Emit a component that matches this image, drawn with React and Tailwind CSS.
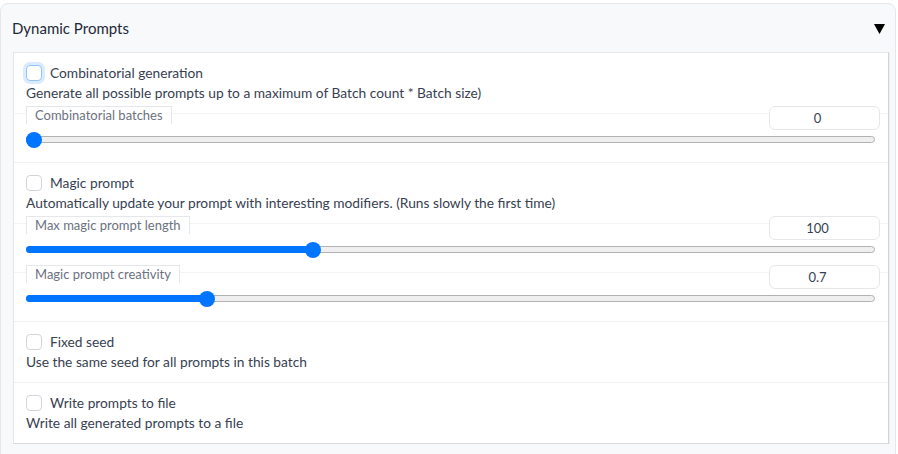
import React from "react";

const font = { fontFamily: '"Source Sans Pro", Lato, "Noto Sans", sans-serif' };

function Checkbox({ focused }) {
  return (
    <span
      className={
        "inline-block w-4 h-4 rounded-[4px] bg-white border shrink-0 " +
        (focused ? "border-[#93c5fd] ring-[3px] ring-[#dbeafe]" : "border-[#d1d5db]")
      }
    />
  );
}

function Slider({ label, value, pct }) {
  return (
    <div>
      <div className="flex justify-between items-start h-[24px] -mx-3 px-3 bg-[linear-gradient(to_bottom,transparent_7px,#f3f4f6_7px,#f3f4f6_8px,transparent_8px)]">
        <span className="h-[18px] px-2 border border-b-0 border-[#e5e7eb] bg-white text-[13px] leading-[17px] text-[#6b7280]">
          {label}
        </span>
        <span className="w-[111px] h-[24px] -mr-1 pr-[14px] rounded-md border border-[#e5e7eb] bg-white text-[13px] leading-[22px] text-center text-[#374151]">
          {value}
        </span>
      </div>
      <div className="relative h-[20px] mr-[1px]">
        <div className="absolute left-0 right-0 top-[6px] h-[7px] rounded-full bg-[#efefef] border border-[#b2b2b2]" />
        <div
          className="absolute left-0 top-[6px] h-[7px] rounded-full bg-[#0075ff]"
          style={{ width: `calc(${pct}% + 7px)` }}
        />
        <div
          className="absolute top-[2px] w-[16px] h-[16px] rounded-full bg-[#0075ff]"
          style={{ left: `calc(${pct / 100} * (100% - 16px))` }}
        />
      </div>
    </div>
  );
}

function Section({ title, desc, focused, first, children, pb = "pb-[10px]" }) {
  return (
    <div className={"px-3 pt-[10px] " + pb + (first ? "" : " border-t border-[#f0f1f3]")}>
      <label className="flex items-center gap-[8px] h-[20px] text-[13.75px] text-[#374151]">
        <Checkbox focused={focused} />
        <span>{title}</span>
      </label>
      <p className="h-[20px] leading-[20px] text-[13.75px] text-[#374151]">{desc}</p>
      {children}
    </div>
  );
}

export default function App() {
  return (
    <div className="w-[898px] h-[454px] overflow-hidden bg-white pt-[3px]" style={font}>
      <div className="w-[896px] h-[470px] rounded-lg border border-[#e5e7eb] bg-[#f8f9fb]">
        <div className="flex items-center justify-between h-[48px] pl-[11px] pr-[10px]">
          <span className="text-[15px] text-[#1f2937]">Dynamic Prompts</span>
          <svg width="11" height="10" viewBox="0 0 11 10" className="mt-[1px]">
            <polygon points="0,0 11,0 5.5,10" fill="#000" />
          </svg>
        </div>
        <div className="ml-[12px] w-[876px] bg-white border border-[#e5e7eb] border-r-[#d4d4d8] border-b-[#d9dadd] shadow-[1px_0_0_#eceef1]">
          <Section
            first
            focused
            title="Combinatorial generation"
            desc="Generate all possible prompts up to a maximum of Batch count * Batch size)"
            pb="pb-[12px]"
          >
            <div className="mt-[3px]">
              <Slider label="Combinatorial batches" value="0" pct={0} />
            </div>
          </Section>
          <Section
            title="Magic prompt"
            desc="Automatically update your prompt with interesting modifiers. (Runs slowly the first time)"
            pb="pb-[12px]"
          >
            <div className="mt-[3px] flex flex-col gap-[5px]">
              <Slider label="Max magic prompt length" value="100" pct={33.5} />
              <Slider label="Magic prompt creativity" value="0.7" pct={20.8} />
            </div>
          </Section>
          <Section title="Fixed seed" desc="Use the same seed for all prompts in this batch" />
          <Section title="Write prompts to file" desc="Write all generated prompts to a file" />
        </div>
      </div>
    </div>
  );
}
